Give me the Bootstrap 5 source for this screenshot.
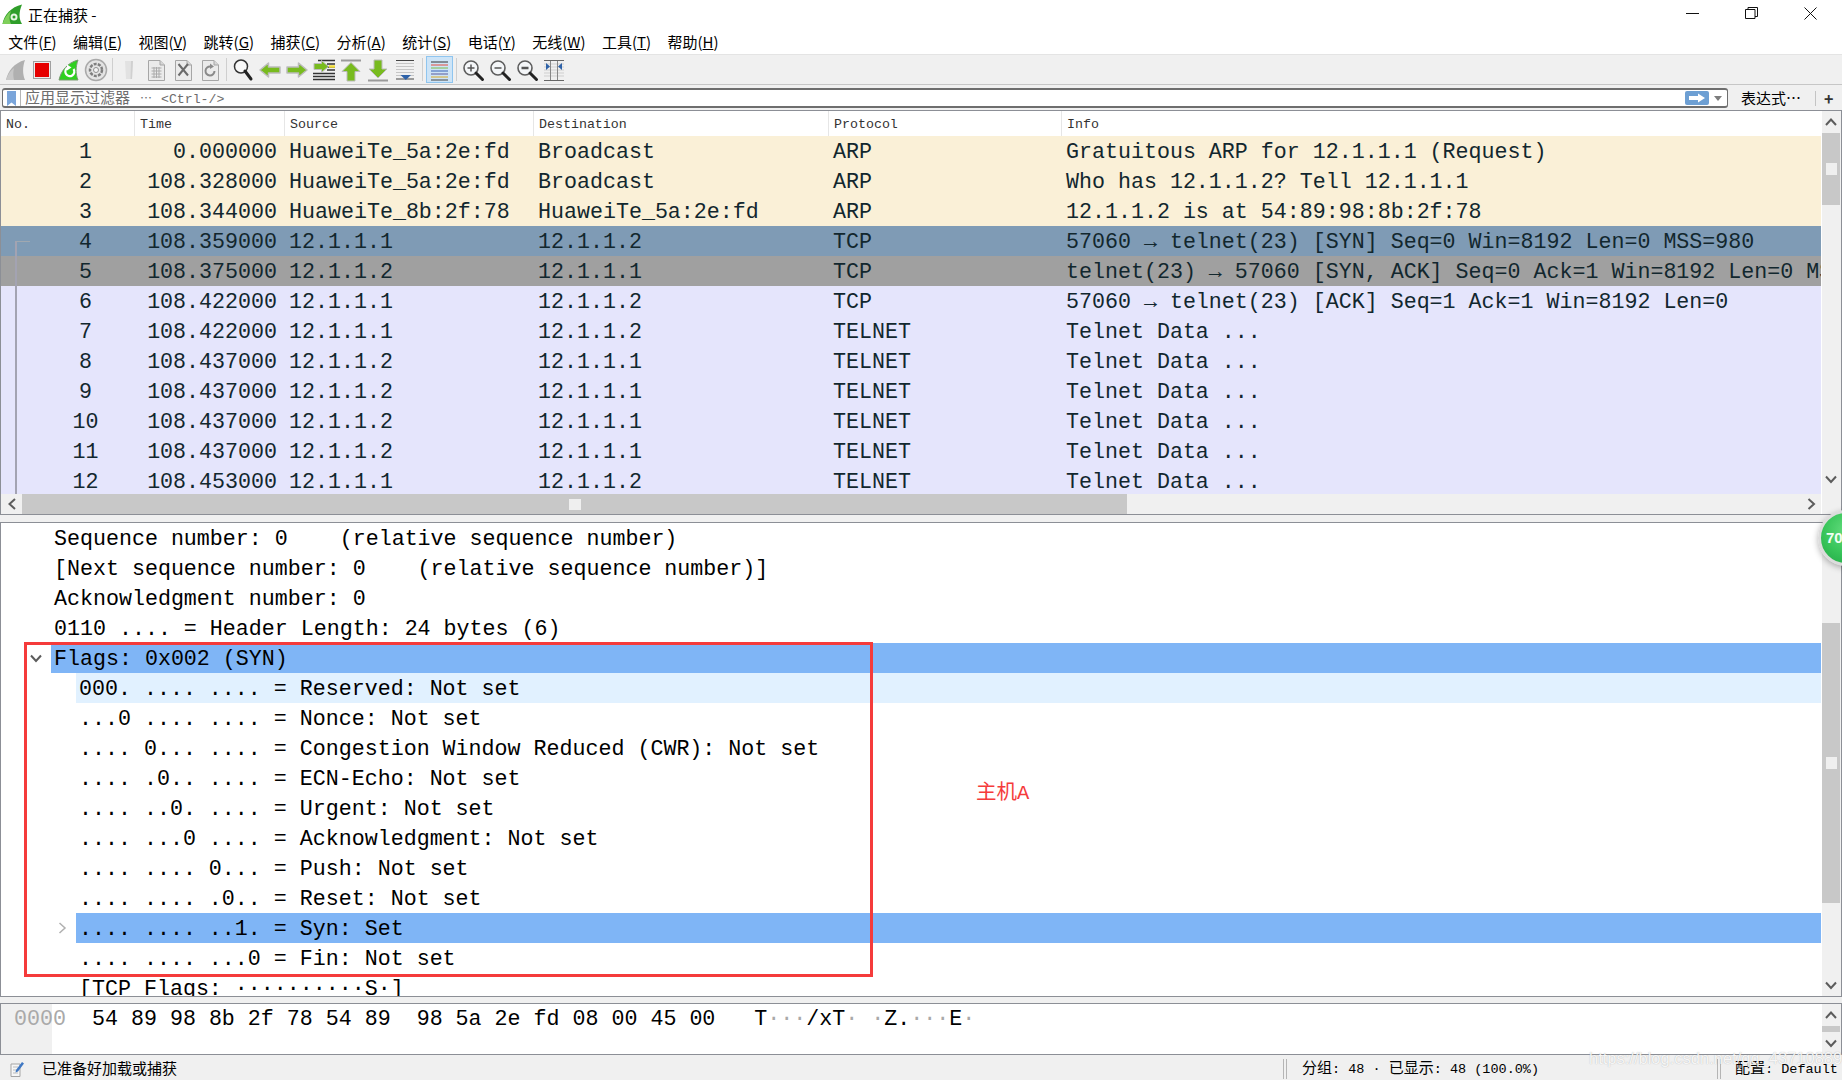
<!DOCTYPE html>
<html lang="zh-CN">
<head>
    <meta charset="UTF-8">
    <meta name="viewport" content="width=device-width, initial-scale=1">
    <title>正在捕获 -</title>
    <link href="https://cdn.jsdelivr.net/npm/bootstrap@5.3.2/dist/css/bootstrap.min.css" rel="stylesheet">
    <script defer src="https://cdn.jsdelivr.net/npm/bootstrap@5.3.2/dist/js/bootstrap.bundle.min.js"></script>
    <style>
        html, body { height: 100%; }
        body {
            width: 1842px; height: 1080px; overflow: hidden; background: #fff; color: #000;
            font-family: "Noto Sans CJK SC", "Liberation Sans", sans-serif; font-size: 15px;
        }
        .mono { font-family: "Liberation Mono", "Noto Sans CJK SC", monospace; }

        .title-bar { height: 32px; padding: 4px 0 0 2px; }
        .title-bar .title-text { margin-left: 5px; line-height: 22px; }
        .win-btns { position: absolute; top: 0; right: 2px; }
        .win-btn { width: 59px; height: 26px; display: flex; align-items: center; justify-content: center; }

        .menu-bar { height: 22px; padding-left: 0; flex-wrap: nowrap; }
        .menu-bar .nav-link { padding: 0 8.2px; color: #000; font-size: 15px; line-height: 20px; }

        .tool-bar { height: 31px; background: #f0f0f0; border-top: 1px solid #e4e4e4; border-bottom: 1px solid #c6c6c6; padding-left: 3px; }
        .tool-btn { width: 27px; height: 27px; display: flex; align-items: center; justify-content: center; flex: none; }
        .tool-btn.first { width: 25px; }
        .tool-btn.on { background: #cde4f7; border: 1px solid #8fc5ef; }
        .tool-sep { width: 6px; flex: none; display: flex; justify-content: center; align-self: stretch; padding: 3px 0; }
        .tool-sep.wide { width: 8px; }
        .tool-sep::after { content: ""; width: 1px; background: #cfcfcf; }

        .filter-bar { height: 25px; background: #f0f0f0; padding: 3px 0 2px 2px; }
        .filter-box { width: 1726px; height: 20px; background: #fff; border: 1px solid #6e6e6e; border-width: 2px 1px; border-radius: 3px; }
        .filter-mark { width: 18px; height: 100%; display: flex; align-items: center; justify-content: center; border-right: 1px solid #b5b5b5; flex: none; }
        .filter-hint { color: #6d6d6d; padding-left: 4px; white-space: pre; font-size: 15px; line-height: 16px; }
        .filter-hint .hint-dots { margin: 0 9px 0 10px; font-size: 12px; }
        .filter-hint .mono { font-size: 13.2px; }
        .filter-end { margin-left: 13px; width: 56px; white-space: nowrap; font-size: 15px; }
        .filter-rule { width: 1px; height: 15px; background: #c4c4c4; margin-left: 18px; }
        .filter-plus { margin-left: 8px; font-weight: 700; font-size: 16px; color: #333; line-height: 1; }

        .pane { border: 1px solid #8c8f96; background: #fff; }
        .list-pane { height: 405px; }
        .pkt-main { width: 1820px; flex: none; }
        .pkt-head, .pkt-row { display: grid; grid-template-columns: 134px 150px 249px 295px 233px 759px; }
        .pkt-head { height: 25px; background: #fff; color: #333; font-size: 13.3px; line-height: 27px; flex: none; }
        .pkt-head > div { padding-left: 5px; border-right: 1px solid #e6e6e6; height: 25px; overflow: hidden; }
        .pkt-head > div:last-child { border-right: 0; }
        .pkt-body { position: relative; height: 358px; overflow: hidden; }
        .pkt-row { height: 30px; line-height: 29px; font-size: 21.65px; color: #12272e; white-space: pre; }
        .pkt-row > div { padding: 2px 0 0 4px; overflow: hidden; }
        .pkt-row > .c-no { text-align: center; padding-left: 35px; }
        .pkt-row > .c-time { text-align: right; padding: 2px 8px 0 0; }
        .tone-arp { background: #faf0d7; }
        .tone-syn { background: #7f9bb5; }
        .tone-ack { background: #a0a0a0; }
        .tone-tcp { background: #e5e5fc; }
        .conv-line { position: absolute; left: 14px; top: 105px; bottom: 0; width: 15px; border-left: 2px solid #a3a3b2; border-top: 1px solid #a0a8b0; pointer-events: none; }

        .h-scroll { height: 20px; background: #f0f0f0; flex: none; }
        .h-arrow { width: 21px; height: 100%; display: flex; align-items: center; justify-content: center; flex: none; }
        .h-track { width: 1105px; height: 100%; background: #c8c8c8; display: flex; align-items: center; flex: none; padding-left: 547px; }
        .h-thumb { width: 12px; height: 11px; background: #efefef; }

        .v-scroll { width: 20px; flex: none; background: #f0f0f0; padding-right: 1px; position: relative; border-left: 1px solid #fff; }
        .v-arrow { height: 22px; display: flex; align-items: center; justify-content: center; flex: none; }
        .v-bar { background: #c8c8c8; display: flex; align-items: center; justify-content: center; flex: none; }
        .v-knob { width: 11px; height: 12px; background: #efefef; }
        .bar-list { height: 72px; }
        .bar-tree { height: 280px; margin-top: 100px; }

        .pane-gap { height: 7px; background: #f0f0f0; flex: none; }
        .tree-pane { height: 475px; }
        .tree-main { position: relative; overflow: hidden; width: 1820px; flex: none; }
        .tree-row { height: 30px; display: flex; font-size: 21.65px; line-height: 27px; white-space: pre; }
        .tree-gutter { flex: none; display: flex; align-items: center; justify-content: flex-end; }
        .lvl-1 { width: 50px; padding-right: 8px; }
        .lvl-2 { width: 75px; padding-right: 9px; }
        .tree-label { flex: 1 1 auto; padding: 3px 0 0 3px; }
        .hit { background: #7fb5f6; }
        .hit-soft { background: #e1f1ff; }
        .red-box { position: absolute; left: 23px; top: 119px; width: 849px; height: 335px; border: 3px solid #f53b3b; pointer-events: none; }
        .red-note { position: absolute; left: 975px; top: 258px; color: #f53b3b; font-size: 20.5px; line-height: 26px; white-space: nowrap; }

        .hex-gap { height: 6px; background: #f0f0f0; flex: none; }
        .hex-pane { height: 52px; }
        .hex-main { width: 1820px; flex: none; font-size: 21.65px; line-height: 32px; white-space: pre; }
        .hex-offset { width: 51px; background: #f0f0f0; color: #a9a9a9; padding-left: 13px; flex: none; }
        .hex-data { padding-left: 40px; }
        .dot { color: #a9a9a9; }

        .status-bar { height: 25px; background: #f0f0f0; position: relative; font-size: 15px; padding-top: 2px; }
        .status-icon { margin-left: 10px; width: 14px; flex: none; }
        .status-msg { margin-left: 18px; width: 1241px; flex: none; }
        .grip { width: 4px; height: 20px; border-left: 1px solid #b5b5b5; border-right: 1px solid #b5b5b5; flex: none; }
        .status-count { margin-left: 15px; width: 415px; flex: none; white-space: pre; font-size: 13.5px; }
        .status-prof { margin-left: 14px; white-space: pre; font-size: 13.5px; }
        .status-count span:not(.mono), .status-prof span:not(.mono) { font-size: 15px; }
        .mark-text { position: absolute; left: 1589px; top: 1047px; font-family: "Liberation Sans", sans-serif; font-size: 16.5px; line-height: 22px; color: rgba(255,255,255,.88); text-shadow: 0 0 1px rgba(120,120,120,.55); white-space: nowrap; }

        .speed-ball {
            position: absolute; left: 1818px; top: 510px; width: 56px; height: 56px; border-radius: 50%;
            background: radial-gradient(circle at 50% 35%, #62dc7c 0, #37c459 55%, #22a746 100%);
            border: 3px solid #dcdcdc; box-shadow: 0 2px 6px rgba(0,0,0,.3);
            color: #f2fff4; font: 700 15px "Liberation Sans", sans-serif; line-height: 50px; padding-left: 5px;
        }
    </style>
</head>
<body class="d-flex flex-column">

<svg width="0" height="0" class="position-absolute">
    <symbol id="up" viewBox="0 0 14 14"><polyline points="2,10 7,4.5 12,10" fill="none" stroke="#5c5c5c" stroke-width="2"/></symbol>
    <symbol id="down" viewBox="0 0 14 14"><polyline points="2,4.5 7,10 12,4.5" fill="none" stroke="#5c5c5c" stroke-width="2"/></symbol>
    <symbol id="left" viewBox="0 0 14 14"><polyline points="10,2 4.5,7 10,12" fill="none" stroke="#5c5c5c" stroke-width="2"/></symbol>
    <symbol id="right" viewBox="0 0 14 14"><polyline points="4.5,2 10,7 4.5,12" fill="none" stroke="#5c5c5c" stroke-width="2"/></symbol>
    <symbol id="page" viewBox="0 0 24 24">
        <path d="M4.5 2.5H16L20.5 7V22.5H4.5Z" fill="#ebebeb" stroke="#a6a6a6"/>
        <path d="M16 2.5V7H20.5" fill="#d6d6d6" stroke="#a6a6a6"/>
    </symbol>
    <symbol id="lens" viewBox="0 0 24 24">
        <circle cx="10" cy="10" r="7" fill="#f4f6f8" stroke="#5d5d5d" stroke-width="1.6"/>
        <path d="M15 15L21.5 21.5" stroke="#222" stroke-width="3" stroke-linecap="round"/>
    </symbol>
</svg>

<!-- заголовок окна -->
<div class="title-bar d-flex align-items-start flex-none">
    <svg width="21" height="21" viewBox="0 0 21 21">
        <path d="M0.5 20C2 11 9 3 20 0.5C17 8 16.500 14 20 20Z" fill="#2f9e2a"/>
        <path d="M0.5 20C2 15 5 10 9 7C7 12 7 16 9 20Z" fill="#7fcf5a"/>
        <circle cx="12" cy="13" r="3.500" fill="#e5f5e0"/><circle cx="12" cy="13" r="1.500" fill="#2f9e2a"/>
    </svg>
    <span class="title-text">正在捕获 -</span>
</div>
<div class="win-btns d-flex">
    <div class="win-btn"><svg width="13" height="12" viewBox="0 0 13 12"><path d="M0 6.500H13" stroke="#111"/></svg></div>
    <div class="win-btn"><svg width="13" height="12" viewBox="0 0 13 12"><path d="M3 2.500V0.500H12.500V9.500H10M0.500 2.500H10V11.500H0.500Z" fill="none" stroke="#111"/></svg></div>
    <div class="win-btn"><svg width="13" height="13" viewBox="0 0 13 13"><path d="M0.500 0.500L12.500 12.500M12.500 0.500L0.500 12.500" stroke="#111"/></svg></div>
</div>

<nav class="menu-bar nav flex-none">
    <a class="nav-link" href="#">文件(<u>F</u>)</a>
    <a class="nav-link" href="#">编辑(<u>E</u>)</a>
    <a class="nav-link" href="#">视图(<u>V</u>)</a>
    <a class="nav-link" href="#">跳转(<u>G</u>)</a>
    <a class="nav-link" href="#">捕获(<u>C</u>)</a>
    <a class="nav-link" href="#">分析(<u>A</u>)</a>
    <a class="nav-link" href="#">统计(<u>S</u>)</a>
    <a class="nav-link" href="#">电话(<u>Y</u>)</a>
    <a class="nav-link" href="#">无线(<u>W</u>)</a>
    <a class="nav-link" href="#">工具(<u>T</u>)</a>
    <a class="nav-link" href="#">帮助(<u>H</u>)</a>
</nav>

<!-- панель инструментов -->
<div class="tool-bar d-flex align-items-center flex-none">
    <div class="tool-btn first"><svg width="24" height="24" viewBox="0 0 24 24"><path d="M2 22C4 13 10 5 21 2C18.500 9 18.500 16 21 22Z" fill="#b0b0b0"/><path d="M2 22C4 16 7 12 10 10C9 14 9 18 10 22Z" fill="#c8c8c8"/></svg></div>
    <div class="tool-btn"><svg width="22" height="22" viewBox="0 0 22 22"><rect x="2.500" y="2.500" width="17" height="17" fill="#ececec" stroke="#a0a0a0"/><rect x="4" y="4" width="14" height="14" fill="#e60000"/></svg></div>
    <div class="tool-btn"><svg width="24" height="24" viewBox="0 0 24 24"><path d="M2 22C4 13 10 5 21 2C18.500 9 18.500 16 21 22Z" fill="#2fd01f" stroke="#7a9a72"/><path d="M16.500 11A4.500 4.500 0 1 1 11 9.500" fill="none" stroke="#fff" stroke-width="2.200"/><path d="M10 6.500L14.500 9.500L10 12.500Z" fill="#fff"/></svg></div>
    <div class="tool-btn"><svg width="24" height="24" viewBox="0 0 24 24"><circle cx="12" cy="12" r="10.500" fill="#e4e4e4" stroke="#a9a9a9" stroke-width="1.500"/><circle cx="12" cy="12" r="6" fill="none" stroke="#7e7e7e" stroke-width="2.500" stroke-dasharray="3 1.200"/><circle cx="12" cy="12" r="2.500" fill="#f4f4f4" stroke="#8f8f8f"/></svg></div>
    <div class="tool-sep"></div>
    <div class="tool-btn"><svg width="24" height="24" viewBox="0 0 24 24"><path d="M8 3H16L15 21H9Z" fill="#e2e2e2"/><path d="M14 3H16L15 21H13.500Z" fill="#d0d0d0"/></svg></div>
    <div class="tool-btn"><svg width="24" height="24" viewBox="0 0 24 24"><use href="#page"/><path d="M7.500 10H17.500M7.500 13H17.500M7.500 16H17.500M7.500 19H17.500M10 9V20M12.500 9V20M15 9V20" stroke="#ababab"/></svg></div>
    <div class="tool-btn"><svg width="24" height="24" viewBox="0 0 24 24"><use href="#page"/><path d="M7.500 6L17 17.500M17 6L7.500 17.500" stroke="#6b6b6b" stroke-width="2"/></svg></div>
    <div class="tool-btn"><svg width="24" height="24" viewBox="0 0 24 24"><use href="#page"/><path d="M16.500 13A4.500 4.500 0 1 1 12.500 8.500" fill="none" stroke="#8a8a8a" stroke-width="2"/><path d="M12 5.500L16 8.500L12 11Z" fill="#8a8a8a"/></svg></div>
    <div class="tool-sep"></div>
    <div class="tool-btn"><svg width="24" height="24" viewBox="0 0 24 24"><circle cx="10" cy="8.500" r="6.500" fill="#f7f7f7" stroke="#333" stroke-width="1.500"/><path d="M14 13L20 21" stroke="#222" stroke-width="3" stroke-linecap="round"/></svg></div>
    <div class="tool-btn"><svg width="24" height="24" viewBox="0 0 24 24"><path d="M2 12L10.500 5V9H22V15H10.500V19Z" fill="#78bb1e" stroke="#bcbcbc" stroke-width="1.500" stroke-linejoin="round"/></svg></div>
    <div class="tool-btn"><svg width="24" height="24" viewBox="0 0 24 24"><path d="M22 12L13.500 5V9H2V15H13.500V19Z" fill="#78bb1e" stroke="#bcbcbc" stroke-width="1.500" stroke-linejoin="round"/></svg></div>
    <div class="tool-btn"><svg width="24" height="24" viewBox="0 0 24 24"><path d="M6 2.500H23M15 6H23M15 9H23M15 12H23M1 15.500H23M1 18.500H23M1 21.500H23" stroke="#333" stroke-width="1.300"/><path d="M17 8.500H23" stroke="#f3de3a" stroke-width="2.500"/><path d="M16.500 8.500L9.500 2.500V5.500H2V11.500H9.500V14.500Z" fill="#78bb1e" stroke="#bcbcbc"/></svg></div>
    <div class="tool-btn"><svg width="24" height="24" viewBox="0 0 24 24"><path d="M2 2.500H22" stroke="#9a9a9a" stroke-width="2"/><path d="M12 4.500L21 13.500H16V23H8V13.500H3Z" fill="#78bb1e" stroke="#bcbcbc"/></svg></div>
    <div class="tool-btn"><svg width="24" height="24" viewBox="0 0 24 24"><path d="M2 22.500H22" stroke="#9a9a9a" stroke-width="2"/><path d="M12 20L21 11H16V2H8V11H3Z" fill="#78bb1e" stroke="#bcbcbc"/></svg></div>
    <div class="tool-btn"><svg width="24" height="24" viewBox="0 0 24 24"><path d="M3 2.500H21" stroke="#444"/><path d="M3 5.500H21M3 8.500H21M3 11.500H21M3 14.500H21M3 17.500H21" stroke="#c5c5c5"/><path d="M3 21H21" stroke="#444"/><path d="M7.500 17H18L12.800 22Z" fill="#2e62a8"/></svg></div>
    <div class="tool-sep wide"></div>
    <div class="tool-btn on"><svg width="21" height="22" viewBox="0 0 21 22"><path d="M2 3H19" stroke="#333"/><path d="M2 6H19" stroke="#e24a3b"/><path d="M2 9H19" stroke="#7fb84a"/><path d="M2 12H19" stroke="#3b62b5"/><path d="M2 15H19" stroke="#5b5b9a"/><path d="M2 18H19" stroke="#d9a929"/><path d="M2 21H19" stroke="#444"/></svg></div>
    <div class="tool-sep"></div>
    <div class="tool-btn"><svg width="24" height="24" viewBox="0 0 24 24"><use href="#lens"/><path d="M6.500 10H13.500M10 6.500V13.500" stroke="#555" stroke-width="1.500"/></svg></div>
    <div class="tool-btn"><svg width="24" height="24" viewBox="0 0 24 24"><use href="#lens"/><path d="M6.500 10H13.500" stroke="#555" stroke-width="1.500"/></svg></div>
    <div class="tool-btn"><svg width="24" height="24" viewBox="0 0 24 24"><use href="#lens"/><path d="M6.500 10H13.500" stroke="#555" stroke-width="2.500"/></svg></div>
    <div class="tool-btn"><svg width="24" height="24" viewBox="0 0 24 24"><path d="M2 2.500H22M2 22.500H22" stroke="#666"/><path d="M2 6H22M2 9H22M2 12H22M2 15H22M2 18H22" stroke="#cfcfcf"/><path d="M8.500 3V22M15.500 3V22" stroke="#888"/><path d="M4 5V12L8 8.500Z M20 5V12L16 8.500Z" fill="#2e62a8"/></svg></div>
</div>

<!-- фильтр -->
<div class="filter-bar d-flex align-items-center flex-none">
    <div class="filter-box d-flex align-items-center position-relative">
        <div class="filter-mark"><svg width="9" height="15" viewBox="0 0 9 15"><path d="M0 0H9V15L4.500 11.500L0 15Z" fill="#7aa5da"/></svg></div>
        <span class="filter-hint">应用显示过滤器<span class="hint-dots">⋯</span><span class="mono">&lt;Ctrl-/&gt;</span></span>
        <svg class="ms-auto" width="24" height="14" viewBox="0 0 24 14"><rect width="24" height="14" rx="2" fill="#6d9fd3"/><path d="M4 5H13V2.500L20 7L13 11.500V9H4Z" fill="#fff"/></svg>
        <svg class="mx-1" width="10" height="14" viewBox="0 0 10 14"><path d="M1 5H9L5 10Z" fill="#7d7d7d"/></svg>
    </div>
    <span class="filter-end">表达式⋯</span>
    <span class="filter-rule"></span>
    <span class="filter-plus">+</span>
</div>

<!-- список пакетов -->
<div class="pane list-pane d-flex flex-none">
    <div class="pkt-main d-flex flex-column">
        <div class="pkt-head mono">
            <div>No.</div><div>Time</div><div>Source</div><div>Destination</div><div>Protocol</div><div>Info</div>
        </div>
        <div class="pkt-body mono">
            <div class="pkt-row tone-arp"><div class="c-no">1</div><div class="c-time">0.000000</div><div>HuaweiTe_5a:2e:fd</div><div>Broadcast</div><div>ARP</div><div>Gratuitous ARP for 12.1.1.1 (Request)</div></div>
            <div class="pkt-row tone-arp"><div class="c-no">2</div><div class="c-time">108.328000</div><div>HuaweiTe_5a:2e:fd</div><div>Broadcast</div><div>ARP</div><div>Who has 12.1.1.2? Tell 12.1.1.1</div></div>
            <div class="pkt-row tone-arp"><div class="c-no">3</div><div class="c-time">108.344000</div><div>HuaweiTe_8b:2f:78</div><div>HuaweiTe_5a:2e:fd</div><div>ARP</div><div>12.1.1.2 is at 54:89:98:8b:2f:78</div></div>
            <div class="pkt-row tone-syn"><div class="c-no">4</div><div class="c-time">108.359000</div><div>12.1.1.1</div><div>12.1.1.2</div><div>TCP</div><div>57060 → telnet(23) [SYN] Seq=0 Win=8192 Len=0 MSS=980</div></div>
            <div class="pkt-row tone-ack"><div class="c-no">5</div><div class="c-time">108.375000</div><div>12.1.1.2</div><div>12.1.1.1</div><div>TCP</div><div>telnet(23) → 57060 [SYN, ACK] Seq=0 Ack=1 Win=8192 Len=0 MSS=980</div></div>
            <div class="pkt-row tone-tcp"><div class="c-no">6</div><div class="c-time">108.422000</div><div>12.1.1.1</div><div>12.1.1.2</div><div>TCP</div><div>57060 → telnet(23) [ACK] Seq=1 Ack=1 Win=8192 Len=0</div></div>
            <div class="pkt-row tone-tcp"><div class="c-no">7</div><div class="c-time">108.422000</div><div>12.1.1.1</div><div>12.1.1.2</div><div>TELNET</div><div>Telnet Data ...</div></div>
            <div class="pkt-row tone-tcp"><div class="c-no">8</div><div class="c-time">108.437000</div><div>12.1.1.2</div><div>12.1.1.1</div><div>TELNET</div><div>Telnet Data ...</div></div>
            <div class="pkt-row tone-tcp"><div class="c-no">9</div><div class="c-time">108.437000</div><div>12.1.1.2</div><div>12.1.1.1</div><div>TELNET</div><div>Telnet Data ...</div></div>
            <div class="pkt-row tone-tcp"><div class="c-no">10</div><div class="c-time">108.437000</div><div>12.1.1.2</div><div>12.1.1.1</div><div>TELNET</div><div>Telnet Data ...</div></div>
            <div class="pkt-row tone-tcp"><div class="c-no">11</div><div class="c-time">108.437000</div><div>12.1.1.2</div><div>12.1.1.1</div><div>TELNET</div><div>Telnet Data ...</div></div>
            <div class="pkt-row tone-tcp"><div class="c-no">12</div><div class="c-time">108.453000</div><div>12.1.1.1</div><div>12.1.1.2</div><div>TELNET</div><div>Telnet Data ...</div></div>
            <div class="conv-line"></div>
        </div>
        <div class="h-scroll d-flex">
            <div class="h-arrow"><svg width="14" height="14"><use href="#left"/></svg></div>
            <div class="h-track"><div class="h-thumb"></div></div>
            <div class="h-arrow ms-auto"><svg width="14" height="14"><use href="#right"/></svg></div>
        </div>
    </div>
    <div class="v-scroll d-flex flex-column">
        <div class="v-arrow"><svg width="14" height="14"><use href="#up"/></svg></div>
        <div class="v-bar bar-list"><div class="v-knob"></div></div>
        <div class="v-arrow mt-auto mb-4"><svg width="14" height="14"><use href="#down"/></svg></div>
    </div>
</div>

<div class="pane-gap"></div>

<!-- дерево деталей -->
<div class="pane tree-pane d-flex flex-none">
    <div class="tree-main mono">
        <div class="tree-row"><div class="tree-gutter lvl-1"></div><div class="tree-label">Sequence number: 0    (relative sequence number)</div></div>
        <div class="tree-row"><div class="tree-gutter lvl-1"></div><div class="tree-label">[Next sequence number: 0    (relative sequence number)]</div></div>
        <div class="tree-row"><div class="tree-gutter lvl-1"></div><div class="tree-label">Acknowledgment number: 0</div></div>
        <div class="tree-row"><div class="tree-gutter lvl-1"></div><div class="tree-label">0110 .... = Header Length: 24 bytes (6)</div></div>
        <div class="tree-row"><div class="tree-gutter lvl-1"><svg width="14" height="14"><use href="#down"/></svg></div><div class="tree-label hit">Flags: 0x002 (SYN)</div></div>
        <div class="tree-row"><div class="tree-gutter lvl-2"></div><div class="tree-label hit-soft">000. .... .... = Reserved: Not set</div></div>
        <div class="tree-row"><div class="tree-gutter lvl-2"></div><div class="tree-label">...0 .... .... = Nonce: Not set</div></div>
        <div class="tree-row"><div class="tree-gutter lvl-2"></div><div class="tree-label">.... 0... .... = Congestion Window Reduced (CWR): Not set</div></div>
        <div class="tree-row"><div class="tree-gutter lvl-2"></div><div class="tree-label">.... .0.. .... = ECN-Echo: Not set</div></div>
        <div class="tree-row"><div class="tree-gutter lvl-2"></div><div class="tree-label">.... ..0. .... = Urgent: Not set</div></div>
        <div class="tree-row"><div class="tree-gutter lvl-2"></div><div class="tree-label">.... ...0 .... = Acknowledgment: Not set</div></div>
        <div class="tree-row"><div class="tree-gutter lvl-2"></div><div class="tree-label">.... .... 0... = Push: Not set</div></div>
        <div class="tree-row"><div class="tree-gutter lvl-2"></div><div class="tree-label">.... .... .0.. = Reset: Not set</div></div>
        <div class="tree-row"><div class="tree-gutter lvl-2"><svg width="10" height="14" viewBox="2 0 10 14"><polyline points="4.500,2 10,7 4.500,12" fill="none" stroke="#b0b0b0" stroke-width="1.500"/></svg></div><div class="tree-label hit">.... .... ..1. = Syn: Set</div></div>
        <div class="tree-row"><div class="tree-gutter lvl-2"></div><div class="tree-label">.... .... ...0 = Fin: Not set</div></div>
        <div class="tree-row"><div class="tree-gutter lvl-2"></div><div class="tree-label">[TCP Flags: ··········S·]</div></div>
        <div class="red-box"></div>
        <div class="red-note">主机A</div>
    </div>
    <div class="v-scroll d-flex flex-column">
        <div class="bar-tree v-bar"><div class="v-knob"></div></div>
        <div class="v-arrow mt-auto"><svg width="14" height="14"><use href="#down"/></svg></div>
    </div>
</div>

<div class="hex-gap"></div>

<!-- байты -->
<div class="pane hex-pane d-flex flex-none">
    <div class="hex-main mono d-flex">
        <div class="hex-offset">0000</div>
        <div class="hex-data">54 89 98 8b 2f 78 54 89  98 5a 2e fd 08 00 45 00   T<span class="dot">···</span>/xT<span class="dot">·</span> <span class="dot">·</span>Z.<span class="dot">···</span>E<span class="dot">·</span></div>
    </div>
    <div class="v-scroll d-flex flex-column">
        <div class="v-arrow"><svg width="14" height="14"><use href="#up"/></svg></div>
        <div class="v-bar flex-grow-1"></div>
        <div class="v-arrow"><svg width="14" height="14"><use href="#down"/></svg></div>
    </div>
</div>

<!-- строка состояния -->
<div class="status-bar d-flex align-items-center flex-grow-1">
    <svg class="status-icon" width="14" height="16" viewBox="0 0 14 16"><path d="M1 3H10V15.500H1Z" fill="#f6f6f6" stroke="#a5a5a5"/><path d="M3 6H8M3 9H8M3 12H8" stroke="#bbb"/><path d="M6 9L12 1L14 2.500L8 10.500L5.500 11.500Z" fill="#3f78c4"/></svg>
    <span class="status-msg">已准备好加载或捕获</span>
    <span class="grip"></span>
    <span class="status-count"><span>分组</span><span class="mono">: 48 · </span><span>已显示</span><span class="mono">: 48 (100.0%)</span></span>
    <span class="grip"></span>
    <span class="status-prof"><span>配置</span><span class="mono">: Default</span></span>
</div>

<div class="mark-text">https://blog.csdn.net/qq_43710889</div>
<div class="speed-ball">70</div>

</body>
</html>
